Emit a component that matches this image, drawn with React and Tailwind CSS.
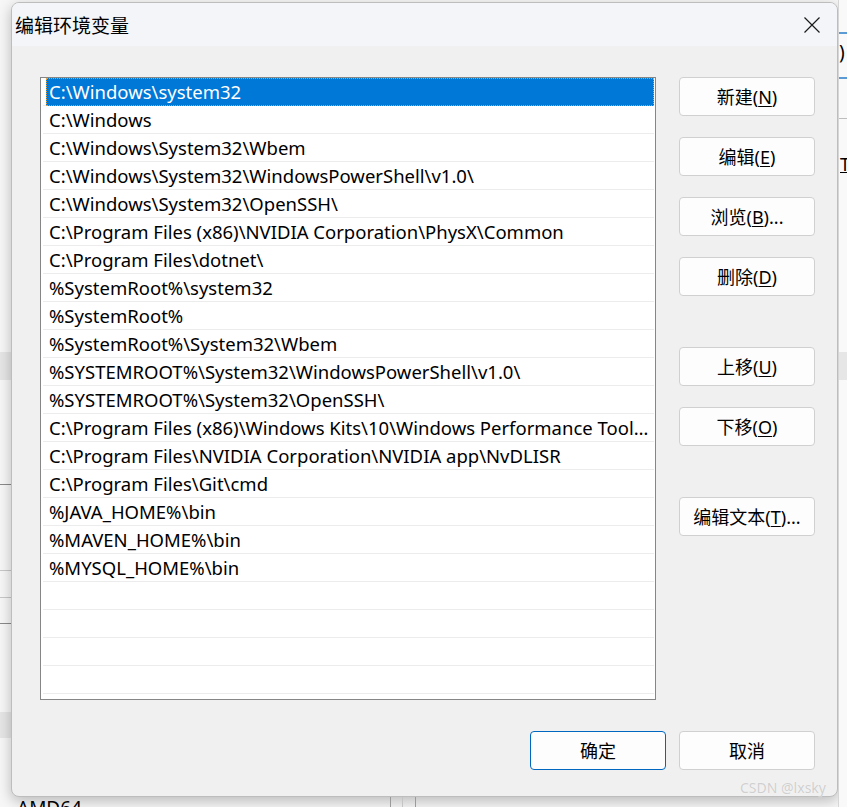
import React from "react";

// Windows "编辑环境变量" dialog (PATH editor), over a bit of the parent window
const paths = [
  "C:\\Windows\\system32",
  "C:\\Windows",
  "C:\\Windows\\System32\\Wbem",
  "C:\\Windows\\System32\\WindowsPowerShell\\v1.0\\",
  "C:\\Windows\\System32\\OpenSSH\\",
  "C:\\Program Files (x86)\\NVIDIA Corporation\\PhysX\\Common",
  "C:\\Program Files\\dotnet\\",
  "%SystemRoot%\\system32",
  "%SystemRoot%",
  "%SystemRoot%\\System32\\Wbem",
  "%SYSTEMROOT%\\System32\\WindowsPowerShell\\v1.0\\",
  "%SYSTEMROOT%\\System32\\OpenSSH\\",
  "C:\\Program Files (x86)\\Windows Kits\\10\\Windows Performance Toolkit\\",
  "C:\\Program Files\\NVIDIA Corporation\\NVIDIA app\\NvDLISR",
  "C:\\Program Files\\Git\\cmd",
  "%JAVA_HOME%\\bin",
  "%MAVEN_HOME%\\bin",
  "%MYSQL_HOME%\\bin",
];

const font = { fontFamily: '"Noto Sans", "Noto Sans CJK SC", sans-serif' };

function Btn({ label, hot, suffix = "", primary = false, className = "" }) {
  return (
    <button
      className={
        "h-[39px] w-[136px] rounded-[4px] border bg-[#fdfdfd] text-[18px] leading-none text-black " +
        (primary ? "border-[#0067c0]" : "border-[#d0d0d0]") +
        " " +
        className
      }
      style={font}
    >
      {label}
      {hot && (
        <>
          (<span className="underline underline-offset-2">{hot}</span>){suffix}
        </>
      )}
    </button>
  );
}

function CloseIcon() {
  return (
    <svg width="16" height="16" viewBox="0 0 16 16" className="block">
      <path d="M0.5 0.5 L15.5 15.5 M15.5 0.5 L0.5 15.5" stroke="#1a1a1a" strokeWidth="1.2" fill="none" />
    </svg>
  );
}

function LeftStrip() {
  return (
    <div className="flex w-[11px] shrink-0 flex-col bg-[#f7f7f7]">
      <div className="h-[352px]" />
      <div className="h-[28px] bg-[#e6e6e6]" />
      <div className="h-[104px]" />
      <div className="h-px bg-[#8a8a8a]" />
      <div className="h-[85px]" />
      <div className="h-px bg-[#c8c8c8]" />
      <div className="h-[26px]" />
      <div className="h-px bg-[#c8c8c8]" />
      <div className="h-[25px]" />
      <div className="h-px bg-[#8a8a8a]" />
      <div className="h-[88px]" />
      <div className="h-[26px] bg-[#e6e6e6]" />
    </div>
  );
}

function RightStrip() {
  return (
    <div className="flex w-[9px] shrink-0 flex-col overflow-hidden border-l border-[#d6d6d6] bg-[#f9f9f9]">
      <div className="h-[32px]" />
      <div className="h-[2px] bg-[#5b9bd5]" />
      <div className="h-[43px] whitespace-nowrap pt-[9px] text-[19px] leading-none text-black">)</div>
      <div className="h-[2px] bg-[#5b9bd5]" />
      <div className="h-[39px]" />
      <div className="h-px bg-[#bdbdbd]" />
      <div className="h-[36px]" />
      <div className="h-[20px] whitespace-nowrap pl-px text-[18px] leading-none text-black underline">T</div>
      <div className="h-[177px]" />
      <div className="h-[28px] bg-[#e6e6e6]" />
    </div>
  );
}

export default function App() {
  const rows = [...paths];
  while (rows.length < 22) rows.push("");

  return (
    <div className="relative flex h-[807px] w-[847px] overflow-hidden bg-[#f7f7f7]" style={font}>
      <LeftStrip />

      <div className="flex w-[827px] shrink-0 flex-col pt-[2px]">
        {/* dialog */}
        <div className="flex h-[795px] shrink-0 flex-col overflow-hidden rounded-[8px] border border-[#bdbdbd] bg-[#f0f0f0] shadow-[0_4px_14px_rgba(0,0,0,0.25)]">
          <div className="flex h-[43px] shrink-0 items-center justify-between bg-[#f3f5f9] pl-[3px] pr-[17px]">
            <span className="text-[19px] leading-none text-black" style={{ fontFamily: '"Noto Sans CJK SC", sans-serif' }}>
              编辑环境变量
            </span>
            <CloseIcon />
          </div>

          <div className="flex flex-1 flex-col pl-[28px] pr-[22px] pt-[31px]">
            <div className="flex gap-[23px]">
              <div className="h-[623px] w-[616px] shrink-0 overflow-hidden border border-[#868686] bg-white pl-[2px] pr-px">
                {rows.map((p, i) => (
                  <div key={i} className="h-[28px] border-b border-[#ececec]">
                    {i === 0 ? (
                      <div className="ml-[3px] h-[28px] truncate bg-[#0078d7] pl-[3px] text-[18.5px] leading-[28px] text-white outline-1 -outline-offset-1 outline-dotted outline-[#e8a040]">
                        {p}
                      </div>
                    ) : (
                      <div className="h-[27px] truncate pl-[6px] text-[18.5px] leading-[28px] text-black">{p}</div>
                    )}
                  </div>
                ))}
              </div>

              <div className="flex flex-col">
                <Btn label="新建" hot="N" />
                <Btn label="编辑" hot="E" className="mt-[21px]" />
                <Btn label="浏览" hot="B" suffix="..." className="mt-[21px]" />
                <Btn label="删除" hot="D" className="mt-[21px]" />
                <Btn label="上移" hot="U" className="mt-[51px]" />
                <Btn label="下移" hot="O" className="mt-[21px]" />
                <Btn label="编辑文本" hot="T" suffix="..." className="mt-[51px]" />
              </div>
            </div>

            <div className="mt-[31px] flex justify-end gap-[13px]">
              <Btn label="确定" primary />
              <Btn label="取消" />
            </div>
          </div>
        </div>

        {/* parent window peeking out below */}
        <div className="flex h-[10px] overflow-hidden">
          <div className="w-[6px]" />
          <div className="w-[373px] pt-[2px] text-[19px] leading-none text-black">AMD64</div>
          <div className="w-px bg-[#9a9a9a]" />
          <div className="w-[11px]" />
          <div className="w-px bg-[#c4c4c4]" />
          <div className="w-[12px]" />
          <div className="w-px bg-[#9a9a9a]" />
        </div>
      </div>

      <RightStrip />

      {/* watermark */}
      <div
        className="absolute left-[740px] top-[781px] text-[14px] leading-none text-[#cfcfcf]"
        style={{ textShadow: "0 0 1px #ffffff" }}
      >
        CSDN @lxsky
      </div>
    </div>
  );
}
